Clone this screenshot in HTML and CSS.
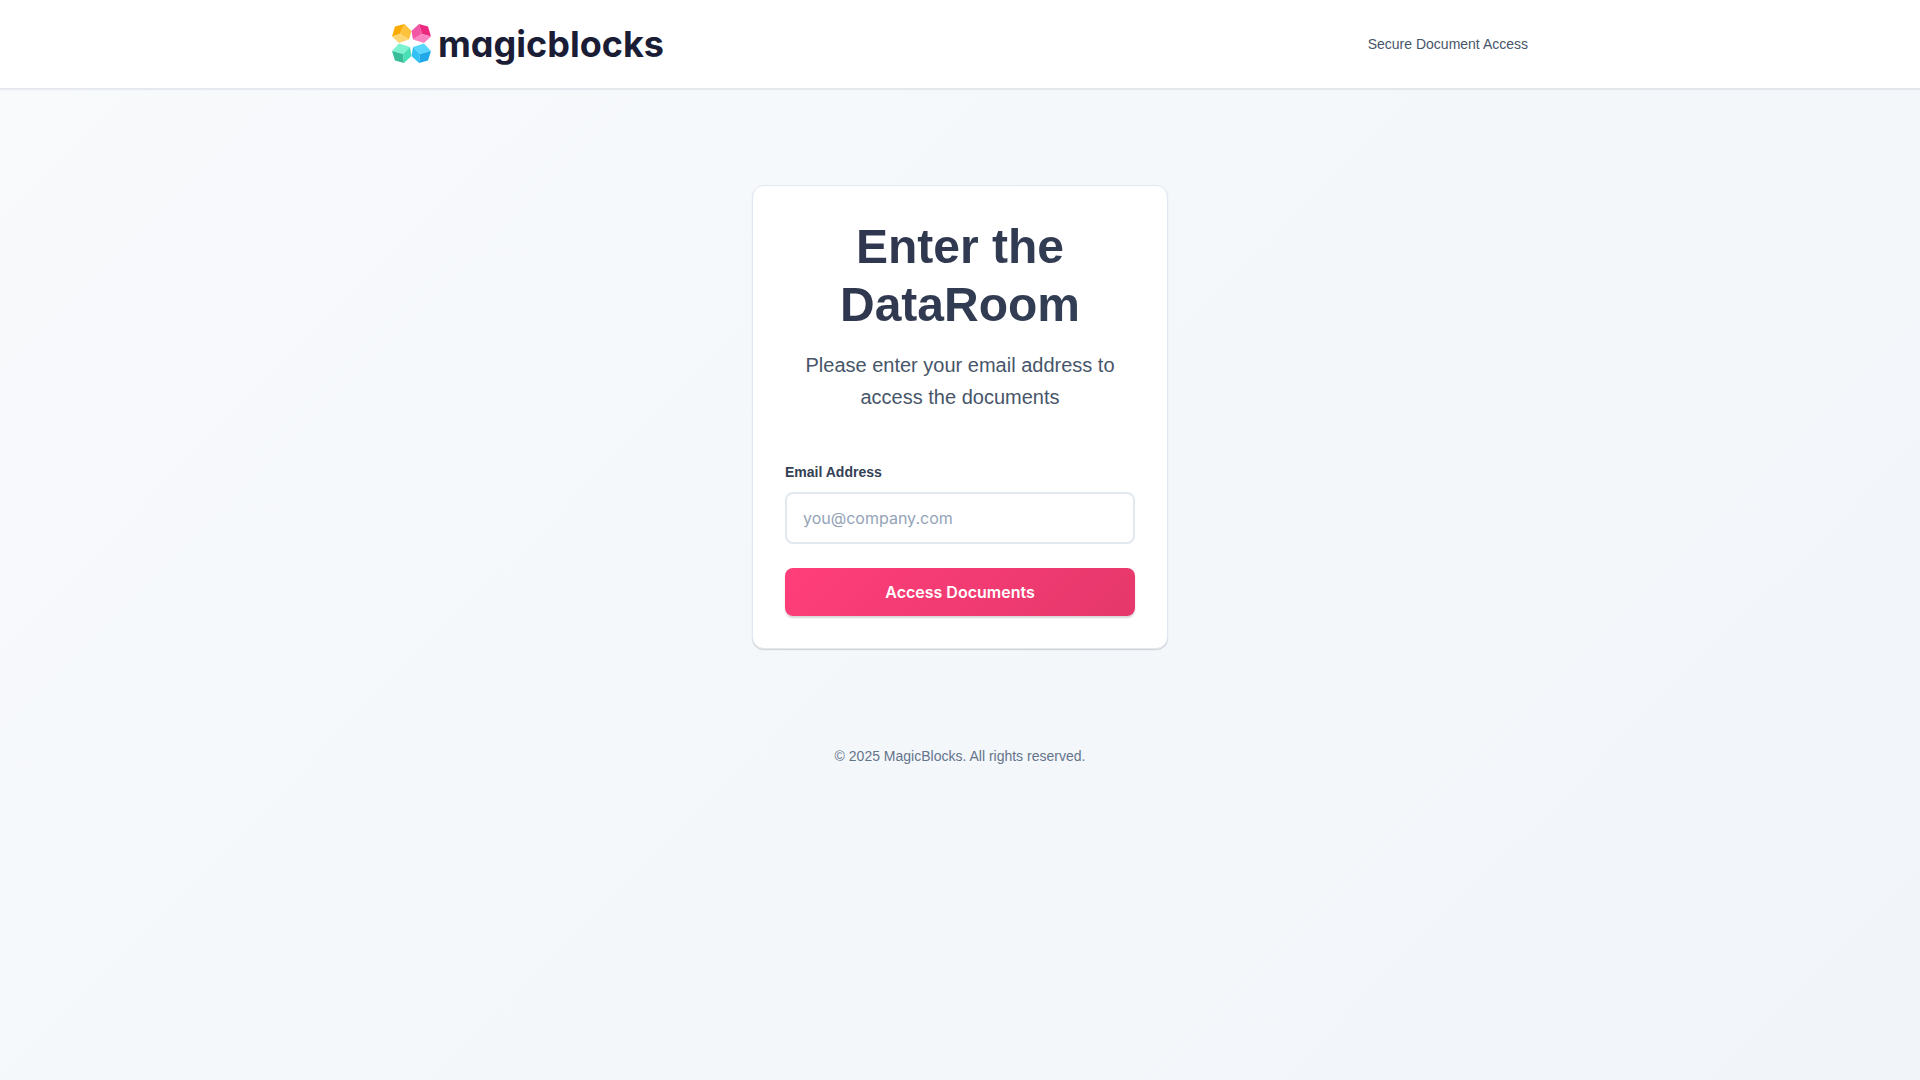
FILE: index.html
```html
<!DOCTYPE html>
<html lang="en">
<head>
  <meta charset="UTF-8">
  <meta name="viewport" content="width=device-width, initial-scale=1.0">
  <title>MagicBlocks DataRoom</title>
  <link rel="stylesheet" href="styles.css">
</head>
<body>
  <header class="header">
    <div class="header-content">
      <a href="#" class="logo">
        <svg class="logo-mark" viewBox="0 0 40 40" aria-hidden="true">
          <!-- yellow block -->
          <path fill="#fbab00" d="M3 2.500L12.500 0L8 10L0 12.500Z"/>
          <path fill="#fdc23c" d="M12.500 0L19.500 7L17 15.500L8 10Z"/>
          <path fill="#fed571" d="M0 12.500L8 10L17 15.500L7 19Z"/>
          <!-- pink block -->
          <path fill="#f257a5" d="M27 0L30 10L21 15.500L19.500 7Z"/>
          <path fill="#ec297f" d="M27 0L36 2.500L39 12.500L30 10Z"/>
          <path fill="#fa84c2" d="M30 10L39 12.500L32 19L21 15.500Z"/>
          <!-- green block -->
          <path fill="#7cf2cf" d="M7 19.500L18 23L11 30L0 27Z"/>
          <path fill="#38bd99" d="M0 27L11 30L12 39L3 36.500Z"/>
          <path fill="#49dfb5" d="M18 23L19.500 32L12 39L11 30Z"/>
          <!-- blue block -->
          <path fill="#5ad6fe" d="M32 19.500L39 27L28 30L21 23Z"/>
          <path fill="#32c1f4" d="M21 23L28 30L27 39L19.500 32Z"/>
          <path fill="#20a8e9" d="M28 30L39 27L36 36.500L27 39Z"/>
        </svg>
        <span class="logo-text">magicblocks</span>
      </a>
      <span class="header-note">Secure Document Access</span>
    </div>
  </header>

  <main class="main">
    <div class="card">
      <h1 class="title">Enter the DataRoom</h1>
      <p class="subtitle">Please enter your email address to access the documents</p>

      <form class="form">
        <label class="form-label" for="email">Email Address</label>
        <input class="form-input" type="email" id="email" name="email" placeholder="you@company.com" required>
        <button class="btn" type="submit">Access Documents</button>
      </form>
    </div>
  </main>

  <footer class="footer">
    <p>&copy; 2025 MagicBlocks. All rights reserved.</p>
  </footer>
</body>
</html>
```
FILE: styles.css
```css
* {
  box-sizing: border-box;
  margin: 0;
  padding: 0;
}

body {
  min-height: 100vh;
  background: linear-gradient(135deg, #f8fafc 0%, #f1f5f9 100%);
  color: #334155;
  font-family: "Liberation Sans", Arial, sans-serif;
  line-height: 22px;
}

.header {
  background: #fff;
  border-bottom: 1px solid #e2e8f0;
  box-shadow: 0 1px 1px rgba(0, 0, 0, 0.06);
}

.header-content {
  display: flex;
  align-items: center;
  justify-content: space-between;
  max-width: 1200px;
  height: 88px;
  margin: 0 auto;
  padding: 0 32px;
}

.logo {
  display: flex;
  align-items: center;
  gap: 6px;
  color: #1a1d35;
  text-decoration: none;
}

.logo-mark {
  width: 40px;
  height: 40px;
}

.logo-text {
  font-family: Inter, sans-serif;
  font-size: 36px;
  font-weight: 700;
  line-height: 40px;
  font-feature-settings: "cv11";
}

.header-note {
  color: #475569;
  font-size: 14px;
}

.main {
  padding: 96px 32px;
}

.card {
  max-width: 416px;
  margin: 0 auto;
  padding: 32px;
  background: #fff;
  border: 1px solid #e2e8f0;
  border-radius: 12px;
  box-shadow: 0 1px 1px rgba(0, 0, 0, 0.16);
}

.title {
  margin-bottom: 15px;
  background: linear-gradient(135deg, #2e334d 0%, #334155 100%);
  -webkit-background-clip: text;
  background-clip: text;
  color: transparent;
  font-size: 48px;
  line-height: 58px;
  text-align: center;
}

.subtitle {
  margin-bottom: 48px;
  color: #475569;
  font-size: 20px;
  line-height: 32px;
  text-align: center;
}

.form {
  display: flex;
  flex-direction: column;
}

.form-label {
  margin-bottom: 9px;
  font-size: 14px;
  font-weight: 600;
}

.form-input {
  width: 100%;
  height: 52px;
  margin-bottom: 24px;
  padding: 0 16px;
  border: 2px solid #e2e8f0;
  border-radius: 8px;
  background: #fff;
  color: #334155;
  font-family: Inter, sans-serif;
  font-size: 16px;
}

.form-input::placeholder {
  color: #94a3b8;
}

.form-input:focus {
  outline: none;
  border-color: #ff3e7a;
}

.btn {
  height: 48px;
  border: none;
  border-radius: 8px;
  background: linear-gradient(135deg, #ff3e7a 0%, #e5386b 100%);
  box-shadow: 0 2px 2px rgba(0, 0, 0, 0.16);
  color: #fff;
  cursor: pointer;
  font-family: Inter, sans-serif;
  font-size: 16px;
  font-weight: 600;
}

.footer {
  color: #64748b;
  font-size: 14px;
  text-align: center;
}
```
